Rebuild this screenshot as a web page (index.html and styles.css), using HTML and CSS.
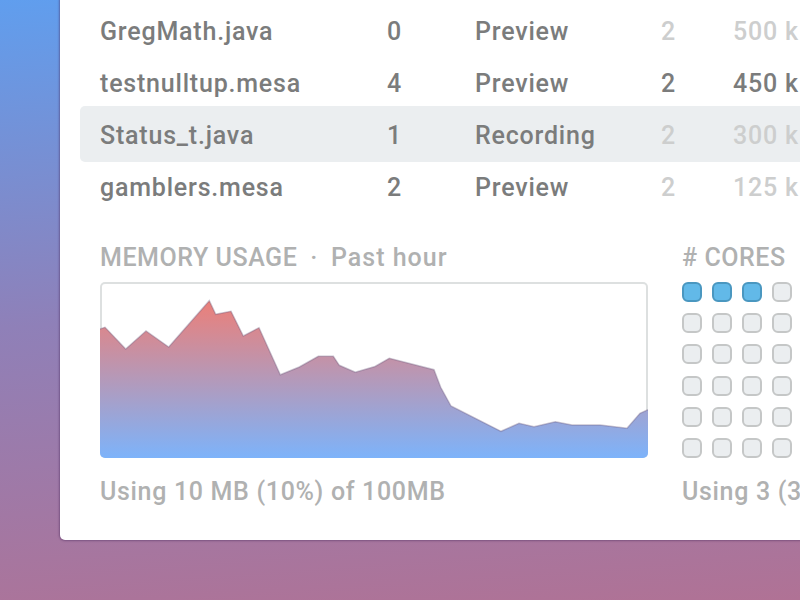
FILE: index.html
```html
<!DOCTYPE html>
<html lang="en">
<head>
    <meta charset="UTF-8">
    <title>Processes</title>
    <link rel="stylesheet" href="styles.css">
</head>
<body>
    <div class="card">
        <div class="table">
            <div class="row">
                <span>GregMath.java</span><span>0</span><span>Preview</span><span class="muted">2</span><span class="muted">500 kB</span>
            </div>
            <div class="row">
                <span>testnulltup.mesa</span><span>4</span><span>Preview</span><span>2</span><span>450 kB</span>
            </div>
            <div class="row selected">
                <span>Status_t.java</span><span>1</span><span>Recording</span><span class="muted">2</span><span class="muted">300 kB</span>
            </div>
            <div class="row">
                <span>gamblers.mesa</span><span>2</span><span>Preview</span><span class="muted">2</span><span class="muted">125 kB</span>
            </div>
        </div>

        <div class="panels">
            <div class="memory">
                <h2 class="heading">MEMORY USAGE<span class="dot">·</span><span class="range">Past hour</span></h2>
                <div class="chart">
                    <svg width="548" height="176" viewBox="0 0 548 176">
                        <defs>
                            <linearGradient id="memFill" gradientUnits="userSpaceOnUse" x1="0" y1="18" x2="0" y2="176">
                                <stop offset="0" stop-color="#ec7f78"/>
                                <stop offset="1" stop-color="#7db3fa"/>
                            </linearGradient>
                        </defs>
                        <polygon fill="url(#memFill)" points="0,47 5,45.3 25.7,67 46,49 68.7,65 109.3,18.7 115.7,32.3 131,29.3 143.3,54 159,45.7 180.3,92.7 199.3,85 218.3,74.3 233.3,74.3 239.3,83.3 255.3,90.3 275,84.5 289.3,76.3 334,87.7 340.7,105.3 351,124 401,149.3 419,141.3 434,144.7 455.3,139.7 472,143 500,143 527,146.3 540,131.3 548,127.7 548,176 0,176"/>
                        <polyline fill="none" stroke="#6a5a7a" stroke-opacity="0.35" stroke-width="1.5" points="0,47 5,45.3 25.7,67 46,49 68.7,65 109.3,18.7 115.7,32.3 131,29.3 143.3,54 159,45.7 180.3,92.7 199.3,85 218.3,74.3 233.3,74.3 239.3,83.3 255.3,90.3 275,84.5 289.3,76.3 334,87.7 340.7,105.3 351,124 401,149.3 419,141.3 434,144.7 455.3,139.7 472,143 500,143 527,146.3 540,131.3 548,127.7"/>
                    </svg>
                </div>
                <p class="note">Using 10 MB (10%) of 100MB</p>
            </div>
            <div class="cores">
                <h2 class="heading"># CORES</h2>
                <div class="core-grid">
                    <i class="core on"></i><i class="core on"></i><i class="core on"></i><i class="core"></i>
                    <i class="core"></i><i class="core"></i><i class="core"></i><i class="core"></i>
                    <i class="core"></i><i class="core"></i><i class="core"></i><i class="core"></i>
                    <i class="core"></i><i class="core"></i><i class="core"></i><i class="core"></i>
                    <i class="core"></i><i class="core"></i><i class="core"></i><i class="core"></i>
                    <i class="core"></i><i class="core"></i><i class="core"></i><i class="core"></i>
                </div>
                <p class="note">Using 3 (30%) of 24</p>
            </div>
        </div>
    </div>
</body>
</html>
```

FILE: styles.css
```css
html, body {
    height: 100%;
}

body {
    margin: 0;
    overflow: hidden;
    background: linear-gradient(176deg, #609eee 0%, #8f80b8 50%, #b07295 100%);
    font-family: "Roboto", "Liberation Sans", sans-serif;
    font-weight: 500;
    letter-spacing: 0.8px;
    white-space: nowrap;
}

.card {
    box-sizing: border-box;
    width: 740px;
    height: 540px;
    margin-left: 60px;
    padding: 5px 0 0 20px;
    background: white;
    border-bottom-left-radius: 5px;
    box-shadow: 0 0 2px 1px rgba(70, 40, 90, 0.45);
    overflow: hidden;
}

.row {
    display: grid;
    grid-template-columns: 287px 88px 186px 72px 100px;
    align-items: center;
    height: 52px;
    padding-left: 20px;
    font-size: 25px;
    color: #7b7c7c;
}

.selected {
    box-sizing: border-box;
    height: 56px;
    margin: -3px 0 -1px;
    padding-top: 2px;
    background: #ebeef0;
    border-radius: 5px 0 0 5px;
}

.muted {
    color: #cdcece;
}

.panels {
    display: flex;
    margin: 0 0 0 20px;
    padding-top: 30px;
}

.memory {
    flex: none;
    width: 582px;
}

.cores {
    flex: none;
    width: 200px;
}

.heading {
    height: 39px;
    margin: 0;
    font-size: 25px;
    font-weight: 500;
    line-height: 30px;
    letter-spacing: 0.55px;
    color: #b0b1b1;
}

.range {
    letter-spacing: 1px;
}

.dot {
    margin: 0 13px;
}

.chart {
    width: 548px;
    height: 176px;
    border-radius: 5px;
    overflow: hidden;
    box-shadow: inset 0 0 0 2px #dde0e0;
}

.chart svg {
    display: block;
}

.core-grid {
    display: grid;
    grid-template-columns: repeat(4, 20px);
    grid-auto-rows: 20px;
    column-gap: 10px;
    row-gap: 11.2px;
    height: 176px;
}

.core {
    box-sizing: border-box;
    background: #ebeef0;
    border: 2px solid #c5c7c7;
    border-radius: 6px;
}

.on {
    background: #62b9e8;
    border-color: #4a97c0;
}

.note {
    margin: 16px 0 0;
    font-size: 25px;
    line-height: 36px;
    letter-spacing: 0.67px;
    color: #b0b1b1;
}
```
